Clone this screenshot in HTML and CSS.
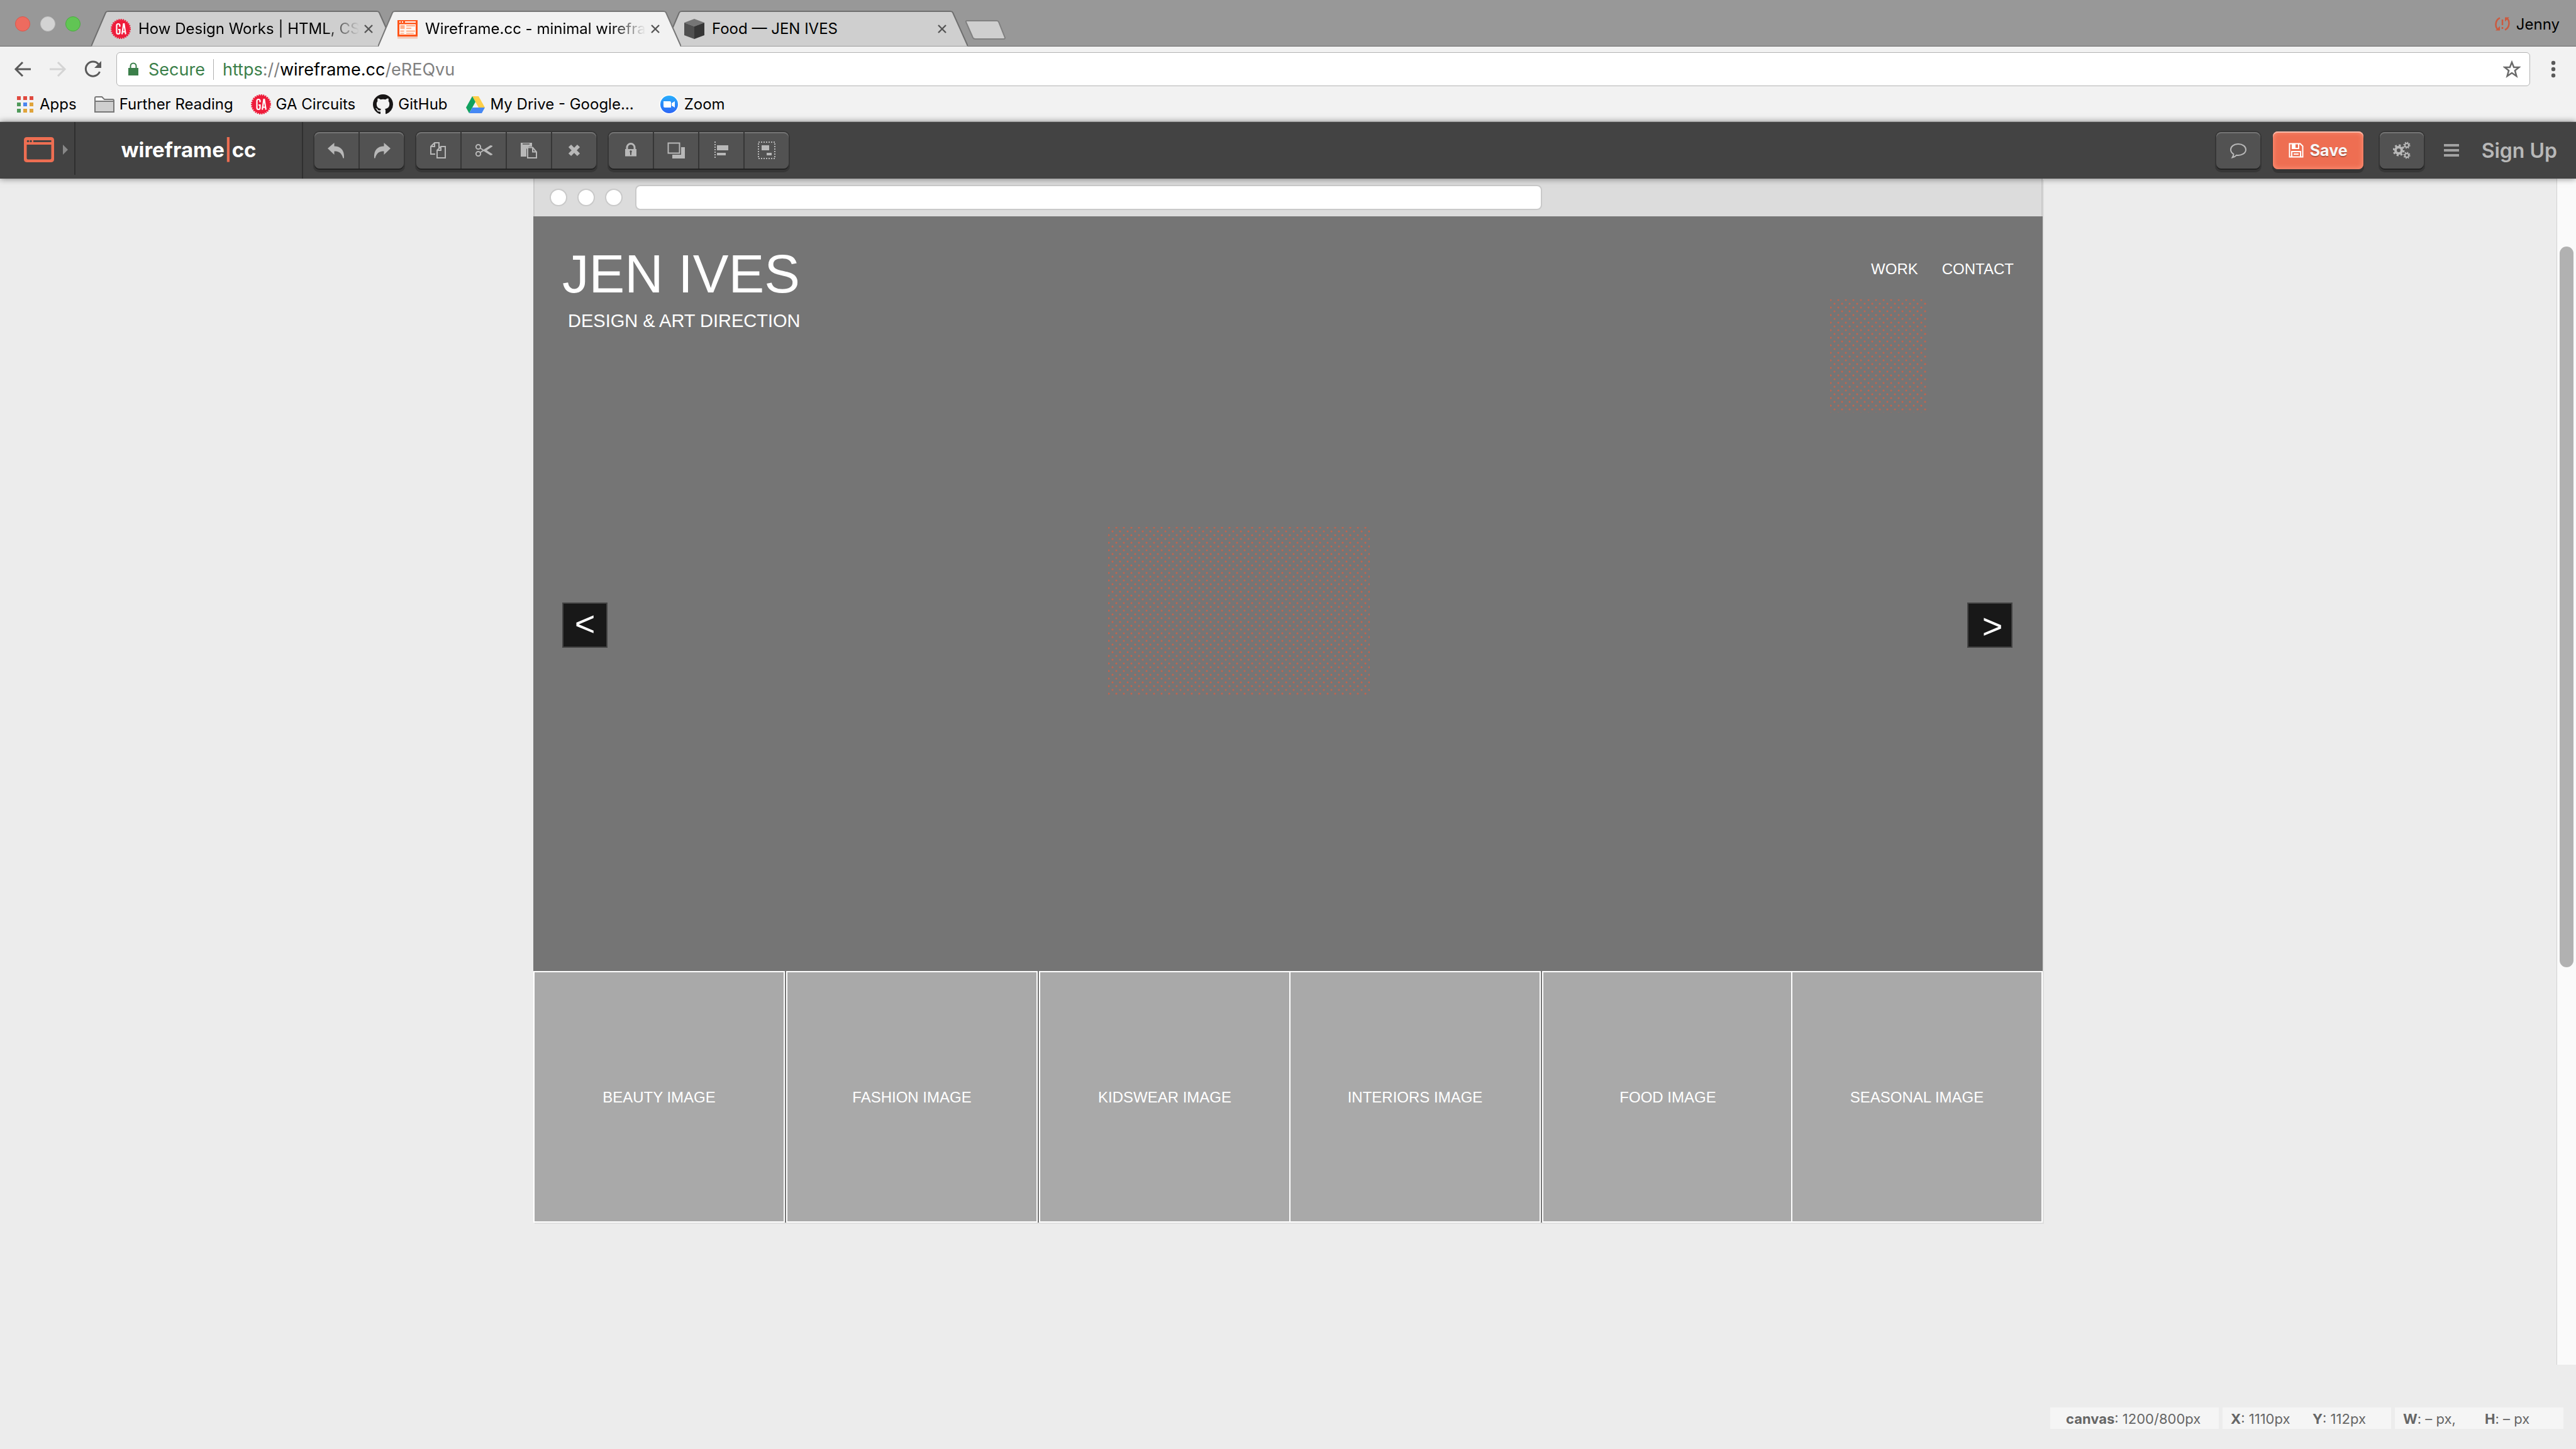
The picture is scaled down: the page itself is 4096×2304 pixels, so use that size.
FILE: index.html
```html
<!DOCTYPE html>
<html lang="en">
<head>
<meta charset="utf-8">
<title>Wireframe.cc - minimal wireframing tool</title>
<link rel="stylesheet" href="styles.css">
</head>
<body>
<svg class="defs" aria-hidden="true">
  <symbol id="ga" viewBox="0 0 32 32">
    <circle cx="16" cy="16" r="14.5" fill="#ee1c3a"/>
    <circle cx="16" cy="16" r="15" fill="none" stroke="#ee1c3a" stroke-width="2" stroke-dasharray="2 1.5"/>
    <path d="M14.5 12.5v-2a2.5 2.5 0 0 0-5 0v11a2.5 2.5 0 0 0 5 0V17h-2.500M18 24.500l2.500-16.500h.8l2.500 16.500M19 20.500h4" fill="none" stroke="#fff" stroke-width="2.200"/>
  </symbol>
  <symbol id="close" viewBox="0 0 14 14">
    <path d="M1 1l12 12M13 1L1 13" stroke="#555" stroke-width="2.400" fill="none"/>
  </symbol>
  <symbol id="undo" viewBox="0 0 28 28">
    <path d="M0 11L10.500 2v5.500C20 7.500 27 13 26 26.500h-1.500C22 18 18 15.500 10.500 15.500V21z"/>
  </symbol>
</svg>

<header class="browser">
  <div class="tab-strip">
    <div class="lights"><span class="light red"></span><span class="light idle"></span><span class="light green"></span></div>
    <div class="tabs">
      <div class="tab">
        <svg class="tab-shape" viewBox="0 0 482 57" preserveAspectRatio="none"><path d="M0 56.500L23 3Q24 1 27 1H454Q457 1 458 3L482 56.500" fill="#cfcfcf" stroke="#6f6f6f" stroke-width="2"/></svg>
        <svg class="favicon"><use href="#ga"/></svg>
        <span class="tab-title fade">How Design Works | HTML, CS</span>
        <button class="tab-close" aria-label="Close tab"><svg><use href="#close"/></svg></button>
      </div>
      <div class="tab active">
        <svg class="tab-shape" viewBox="0 0 482 57" preserveAspectRatio="none"><path d="M0 57L23 3Q24 1 27 1H454Q457 1 458 3L482 57" fill="#f2f2f2" stroke="#777" stroke-width="2"/></svg>
        <svg class="favicon" viewBox="0 0 32 32"><path d="M0 28h32v3.500H0z" fill="#f3c9b8"/><path d="M0 2h32v26H0z" fill="#ff5519"/><path d="M3 8.500h26v16.500H3z" fill="#fff6f0"/><path d="M3 4h2v2H3zM7 4h2v2H7zM12 4h17v2H12z" fill="#fff"/><path d="M4.500 10h7v6h-7zM14 10h14v2H14zM14 14h8v2h-8zM4.500 18.500h6v2h-6zM14 18.500h14v2H14zM4.500 22.500h6v1.500h-6zM14 22.500h12v1.500H14z" fill="#ffb08c"/></svg>
        <span class="tab-title fade">Wireframe.cc - minimal wirefra</span>
        <button class="tab-close" aria-label="Close tab"><svg><use href="#close"/></svg></button>
      </div>
      <div class="tab">
        <svg class="tab-shape" viewBox="0 0 482 57" preserveAspectRatio="none"><path d="M0 56.500L23 3Q24 1 27 1H454Q457 1 458 3L482 56.500" fill="#cfcfcf" stroke="#6f6f6f" stroke-width="2"/></svg>
        <svg class="favicon" viewBox="0 0 32 32"><path d="M0 6L16 0 32 6 16 12z" fill="#757575"/><path d="M0 6l16 6v20L0 26z" fill="#505050"/><path d="M32 6l-16 6v20l16-6z" fill="#363636"/></svg>
        <span class="tab-title">Food — JEN IVES</span>
        <button class="tab-close" aria-label="Close tab"><svg><use href="#close"/></svg></button>
      </div>
      <button class="new-tab" aria-label="New tab"><svg viewBox="0 0 64 32"><path d="M1 3Q0 1 3 1H50Q52 1 53 3L63 28Q63 30 61 30H16Q13 30 12 28z" fill="#cfcfcf" stroke="#808080" stroke-width="2"/></svg></button>
    </div>
    <button class="profile"><svg viewBox="0 0 24 24" fill="none" stroke="#cb5a3f" stroke-width="2.500"><path d="M8 2.500C0 6 0 17 5 21M16 21.500C24 18 24 7 19 3M12 5v9M12 17v3"/><path d="M1 22.500h7v-7zM23 1.500h-7v7z" fill="#cb5a3f" stroke="none"/></svg>Jenny</button>
  </div>

  <div class="toolbar">
    <button class="nav" aria-label="Back"><svg viewBox="0 0 28 28"><path d="M14 3L3 14l11 11M3 14h24" fill="none" stroke="#5a5a5a" stroke-width="3"/></svg></button>
    <button class="nav" aria-label="Forward"><svg viewBox="0 0 28 28"><path d="M14 3l11 11-11 11M25 14H1" fill="none" stroke="#d4d4d4" stroke-width="3"/></svg></button>
    <button class="nav" aria-label="Reload"><svg viewBox="0 0 28 28"><path d="M22.500 6A11.500 11.500 0 1 0 24.500 18" fill="none" stroke="#5a5a5a" stroke-width="3"/><path d="M27 1v11H16z" fill="#5a5a5a"/></svg></button>
    <div class="omnibox">
      <svg class="lock" viewBox="0 0 16 22"><path d="M0 9h16v12H0z" fill="#3b7f4a"/><path d="M3.500 9V6a4.500 4.500 0 0 1 9 0v3" fill="none" stroke="#3b7f4a" stroke-width="2"/></svg>
      <span class="secure">Secure</span>
      <span class="url"><span class="scheme">https</span>://<span class="host">wireframe.cc</span>/eREQvu</span>
      <button class="star" aria-label="Bookmark this page"><svg viewBox="0 0 28 28"><path d="M14 3l3.200 8h8.300l-6.600 5.200 2.500 8.800L14 20l-7.400 5 2.500-8.800L2.500 11h8.300z" fill="none" stroke="#6a6a6a" stroke-width="2.500"/></svg></button>
    </div>
    <button class="kebab" aria-label="Menu"><svg viewBox="0 0 8 28" fill="#5a5a5a"><circle cx="4" cy="4" r="3.200"/><circle cx="4" cy="14" r="3.200"/><circle cx="4" cy="24" r="3.200"/></svg></button>
  </div>

  <nav class="bookmarks">
    <a href="#"><svg class="i26" viewBox="0 0 26 26"><path d="M0 0h6v6H0zM10 0h6v6h-6zM20 0h6v6h-6z" fill="#e04a3f"/><path d="M0 10h6v6H0zM0 20h6v6H0z" fill="#4f9a5a"/><path d="M10 10h6v6h-6z" fill="#4a86f0"/><path d="M20 10h6v6h-6zM10 20h6v6h-6zM20 20h6v6h-6z" fill="#e0a43a"/></svg>Apps</a>
    <a href="#"><svg viewBox="0 0 32 32"><path d="M1 28V6q0-2 2-2h9l4 4h13q2 0 2 2v18z" fill="#fafafa" stroke="#777" stroke-width="2"/><path d="M1 11h30v16q0 1-1 1H2q-1 0-1-1z" fill="#cfcfcf" stroke="#777" stroke-width="2"/></svg>Further Reading</a>
    <a href="#"><svg><use href="#ga"/></svg>GA Circuits</a>
    <a href="#"><svg viewBox="0 0 16 16"><path fill="#181616" fill-rule="evenodd" d="M8 0C3.580 0 0 3.580 0 8c0 3.540 2.290 6.530 5.470 7.590.4.070.55-.17.55-.38 0-.19-.01-.82-.01-1.490-2.010.37-2.530-.49-2.690-.94-.09-.23-.48-.94-.82-1.130-.28-.15-.68-.52-.01-.53.63-.01 1.080.58 1.230.82.720 1.210 1.870.87 2.330.66.070-.52.280-.87.510-1.070-1.780-.2-3.640-.89-3.640-3.950 0-.87.310-1.590.82-2.150-.08-.2-.36-1.020.08-2.120 0 0 .67-.21 2.200.82.640-.18 1.320-.27 2-.27s1.360.09 2 .27c1.530-1.040 2.200-.82 2.200-.82.440 1.100.16 1.920.08 2.120.51.560.82 1.270.82 2.150 0 3.070-1.870 3.750-3.650 3.950.29.250.54.730.54 1.480 0 1.070-.01 1.930-.01 2.200 0 .21.150.46.550.38A8.010 8.010 0 0 0 16 8c0-4.420-3.580-8-8-8z"/></svg>GitHub</a>
    <a href="#"><svg viewBox="0 0 32 32"><path d="M11 3h10l10 18H21z" fill="#ffcf48"/><path d="M11 3l5 9L6 30 1 21z" fill="#11a15f"/><path d="M11 21h20l-5 9H6z" fill="#4688f4"/></svg>My Drive - Google…</a>
    <a href="#" class="last"><svg viewBox="0 0 32 32"><defs><linearGradient id="zg" x2="0" y2="1"><stop offset="0" stop-color="#28aefc"/><stop offset="1" stop-color="#2c65f5"/></linearGradient></defs><circle cx="16" cy="16" r="15.500" fill="#fff"/><circle cx="16" cy="16" r="14" fill="url(#zg)"/><path d="M7 11h10q2 0 2 2v8H9q-2 0-2-2zM20 14l5-3v10l-5-3z" fill="#fff"/></svg>Zoom</a>
  </nav>
</header>

<div class="appbar">
  <button class="app-menu" aria-label="Device"><svg class="device" viewBox="0 0 48 40"><path fill="#ee6e52" fill-rule="evenodd" d="M5 0h38q5 0 5 5v30q0 5-5 5H5q-5 0-5-5V5q0-5 5-5zM4.500 12v21.500q0 2 2 2h35q2 0 2-2V12zM15 5v3h28.500V5z"/><circle cx="6.500" cy="6.500" r="1.800" fill="#444"/><circle cx="11" cy="6.500" r="1.800" fill="#444"/></svg><svg class="caret" viewBox="0 0 8 16"><path d="M0 0l8 8-8 8z" fill="#888"/></svg></button>
  <a class="brand" href="#">wireframe<span>|</span>cc</a>
  <div class="groups">
    <div class="group">
      <button aria-label="Undo"><svg><use href="#undo"/></svg></button>
      <button aria-label="Redo"><svg class="flip"><use href="#undo"/></svg></button>
    </div>
    <div class="group">
      <button aria-label="Copy"><svg viewBox="0 0 28 28" class="line"><path d="M9 20H2V8l6-6h7v8M8 2v6H2M18 8h7v18H12V14zM18 8v6h-6"/></svg></button>
      <button aria-label="Cut"><svg viewBox="0 0 28 28" class="line"><circle cx="5.500" cy="8.500" r="3.600"/><circle cx="5.500" cy="19.500" r="3.600"/><path d="M8.500 10.500L25 21l2-.5L15 12.500M8.500 17.500L25 7l2 .5L15 15.500"/></svg></button>
      <button aria-label="Paste"><svg viewBox="0 0 28 28"><path d="M1 2h18v6h-5l-4 4v12H1z"/><path d="M4 4h11" stroke="#525252" stroke-width="1.500"/><path d="M12 9.500h8l6 7V26H12zM20 9.500v7h6" fill="#525252" stroke="#b8b8b8" stroke-width="2"/></svg></button>
      <button aria-label="Delete"><svg viewBox="0 0 28 28"><path d="M7 7l14 14M21 7L7 21" stroke="#b8b8b8" stroke-width="6"/></svg></button>
    </div>
    <div class="group">
      <button aria-label="Lock"><svg viewBox="0 0 28 28"><path fill-rule="evenodd" d="M5 12h18v11.500H5zM14 14a2 2 0 0 0-1 3.500v4h2v-4a2 2 0 0 0-1-3.500z"/><path d="M8 12V9.500a6 6 0 0 1 12 0V12" fill="none" stroke="#b8b8b8" stroke-width="3"/></svg></button>
      <button aria-label="Arrange"><svg viewBox="0 0 28 28"><path d="M1.500 2.500h18v16h-18z" fill="none" stroke="#b8b8b8" stroke-width="2"/><path d="M22 9h6v18H8v-6h14z"/></svg></button>
      <button aria-label="Align"><svg viewBox="0 0 28 28"><path d="M4 0v28" stroke="#b8b8b8" stroke-width="2" stroke-dasharray="2 2"/><path d="M7 6h18v8H7zM7 18h14v4H7z"/></svg></button>
      <button aria-label="Group"><svg viewBox="0 0 28 28"><path d="M1 1h26v26H1z" fill="none" stroke="#b8b8b8" stroke-width="2" stroke-dasharray="2 2"/><path d="M6 6h12v8H6zM14 18h8v4h-8z"/></svg></button>
    </div>
  </div>
  <div class="actions">
    <div class="group"><button aria-label="Comments"><svg viewBox="0 0 28 28" class="line"><path d="M14 4C7 4 2 8 2 13c0 3 2 5.500 4.500 7 0 2-1 4-2 5.500 3-.5 5-2 6.500-3.700 8 1 15-3 15-8.800C26 8 21 4 14 4z"/></svg></button></div>
    <button class="save"><svg viewBox="0 0 24 24"><path d="M1.500 1.500h17l4 4v17h-21zM5 22v-8h14v8M8 18h8M6 2v7h10V2" fill="none" stroke="#fff" stroke-width="2"/><path d="M6 2h5v7H6z" fill="#fff"/></svg>Save</button>
    <div class="group settings"><button aria-label="Settings"><svg viewBox="0 0 28 28" fill="none" stroke="#b8b8b8"><circle cx="9" cy="14" r="5" stroke-width="4"/><circle cx="9" cy="14" r="8" stroke-width="3" stroke-dasharray="3.140 3.140"/><circle cx="22" cy="6" r="3" stroke-width="2"/><circle cx="22" cy="6" r="4.600" stroke-width="2" stroke-dasharray="1.800 1.800"/><circle cx="22" cy="22" r="3" stroke-width="2"/><circle cx="22" cy="22" r="4.600" stroke-width="2" stroke-dasharray="1.800 1.800"/></svg></button></div>
    <button class="burger" aria-label="Menu"><svg viewBox="0 0 24 20"><path d="M0 0h24v4H0zM0 8h24v4H0zM0 16h24v4H0z" fill="#a2a2a2"/></svg></button>
    <a class="signup" href="#">Sign Up</a>
  </div>
</div>

<main class="workspace">
  <div class="canvas">
    <div class="frame-bar"><span class="dot"></span><span class="dot"></span><span class="dot"></span><span class="frame-url"></span></div>
    <section class="hero">
      <div class="hero-top">
        <div class="title"><h1>JEN IVES</h1><p>DESIGN &amp; ART DIRECTION</p></div>
        <nav><a href="#">WORK</a><a href="#">CONTACT</a></nav>
      </div>
      <div class="slider"><button aria-label="Previous">&lt;</button><button class="next" aria-label="Next">&gt;</button></div>
      <div class="selection small"></div>
      <div class="selection large"></div>
    </section>
    <div class="tiles">
      <div class="tile">BEAUTY IMAGE</div>
      <div class="tile">FASHION IMAGE</div>
      <div class="tile">KIDSWEAR IMAGE</div>
      <div class="tile lap-left">INTERIORS IMAGE</div>
      <div class="tile">FOOD IMAGE</div>
      <div class="tile lap-more">SEASONAL IMAGE</div>
    </div>
  </div>
  <div class="scroll-track"><div class="scroll-thumb"></div></div>
  <div class="status">
    <div class="size"><span><b>canvas</b>: 1200/800px</span></div>
    <div><span><b>X</b>: 1110px</span><span><b>Y</b>: 112px</span></div>
    <div><span><b>W</b>: – px,</span><span><b>H</b>: – px</span></div>
  </div>
</main>
</body>
</html>
```
FILE: styles.css
```css
* { box-sizing: border-box; }
body {
  margin: 0;
  min-height: 100vh;
  display: flex;
  flex-direction: column;
  background: #ececec;
  font-family: Inter, "Liberation Sans", sans-serif;
  font-size: 24px;
  color: #000;
}
button {
  margin: 0;
  padding: 0;
  border: 0;
  background: none;
  font: inherit;
  color: inherit;
}
a { color: inherit; text-decoration: none; }
svg { display: block; flex: none; }
.defs { position: absolute; width: 0; height: 0; }

/* browser window */
.browser { background: #f2f2f2; border-bottom: 1px solid #cfcfcf; }
.tab-strip {
  display: flex;
  height: 74px;
  background: #989898;
  box-shadow: inset 0 -1px #6a6a6a;
}
.lights { display: flex; gap: 16px; padding: 26px 0 0 24px; width: 145px; }
.light { width: 24px; height: 24px; border-radius: 50%; border: 1px solid; }
.red { background: #ed6b5f; border-color: #d9574b; }
.idle { background: #d3d3d3; border-color: #c0c0c0; }
.green { background: #61c554; border-color: #4bab40; }
.tabs { display: flex; align-items: flex-end; flex: 1; }
.tab {
  position: relative;
  display: flex;
  align-items: center;
  width: 482px;
  height: 57px;
  padding: 0 33px 0 31px;
}
.tab + .tab { margin-left: -26px; }
.tab.active { z-index: 1; }
.tab-shape { position: absolute; inset: 0; width: 100%; height: 100%; }
.favicon { position: relative; width: 32px; height: 32px; }
.tab-title {
  position: relative;
  flex: 1;
  min-width: 0;
  margin: 0 8px 0 12px;
  white-space: nowrap;
}
.fade { mask-image: linear-gradient(to right, #000 calc(100% - 56px), transparent); }
.tab-close { position: relative; margin-right: 1px; }
.tab-close svg { width: 14px; height: 14px; }
.new-tab { margin: 0 0 10px -4px; }
.new-tab svg { width: 64px; height: 32px; }
.profile { display: flex; align-items: center; gap: 10px; padding: 2px 26px 0 0; }
.profile svg { width: 24px; height: 24px; }

.toolbar { display: flex; align-items: center; height: 72px; padding: 0 32px 0 22px; }
.nav { width: 28px; margin-right: 28px; }
.nav svg { width: 28px; height: 28px; }
.omnibox {
  display: flex;
  align-items: center;
  flex: 1;
  height: 54px;
  margin-right: 33px;
  margin-left: -5px;
  padding: 0 14px 0 18px;
  border: 1px solid #b3b3b3;
  border-radius: 6px;
  background: #fff;
  font-size: 27px;
}
.lock { width: 16px; height: 22px; margin-right: 16px; }
.secure {
  padding-right: 13px;
  margin-right: 14px;
  border-right: 1px solid #b0b0b0;
  color: #3b7f4a;
}
.url { flex: 1; color: #808080; }
.scheme { color: #3b7f4a; }
.host { color: #000; }
.star svg { width: 28px; height: 28px; }
.kebab svg { width: 8px; height: 28px; }
.bookmarks {
  display: flex;
  align-items: center;
  gap: 28px;
  height: 47px;
  padding: 0 27px 8px;
}
.bookmarks a { display: flex; align-items: center; gap: 8px; }
.bookmarks svg { width: 32px; height: 32px; }
.bookmarks .i26 { width: 26px; height: 26px; margin-right: 2px; }
.bookmarks .last { margin-left: 12px; }

/* application bar */
.appbar {
  position: relative;
  z-index: 2;
  display: flex;
  align-items: center;
  height: 90px;
  background: #434343;
  box-shadow: 0 0 10px rgba(0, 0, 0, .5);
}
.app-menu {
  display: flex;
  align-items: center;
  align-self: flex-start;
  gap: 14px;
  width: 120px;
  height: 84px;
  padding: 4px 0 0 38px;
  border-right: 2px solid #2f2f2f;
}
.device { width: 48px; height: 40px; }
.caret { width: 8px; height: 16px; }
.brand {
  display: flex;
  align-items: center;
  justify-content: center;
  width: 362px;
  height: 90px;
  padding-bottom: 2px;
  border-right: 2px solid #2f2f2f;
  color: #fff;
  font-size: 33px;
  font-weight: 700;
}
.brand span { color: #ee6e52; font-weight: 600; }
.groups { display: flex; gap: 20px; margin-left: 18px; }
.group {
  display: flex;
  gap: 2px;
  height: 58px;
  border-radius: 8px;
  background: #363636;
  box-shadow: 0 2px #222, 0 4px 0 2px #363636, 0 0 0 2px #363636;
}
.group button {
  display: grid;
  place-items: center;
  width: 70px;
  background: #525252;
  box-shadow: inset 0 2px #757575;
}
.group button:first-child { border-radius: 8px 0 0 8px; }
.group button:last-child { border-radius: 0 8px 8px 0; }
.group button:only-child { border-radius: 8px; }
.group svg { width: 28px; height: 28px; fill: #b8b8b8; }
.group .line { fill: none; stroke: #b8b8b8; stroke-width: 2; }
.settings svg { fill: none; }
.flip { transform: scaleX(-1); }
.actions { display: flex; align-items: center; margin-left: auto; padding-right: 30px; }
.save {
  display: flex;
  align-items: center;
  justify-content: center;
  gap: 10px;
  width: 144px;
  height: 60px;
  margin: 0 26px 0 20px;
  border-radius: 8px;
  background: #ee6e52;
  box-shadow: inset 0 2px #ffb9a8, inset 0 0 8px #ff9a80, 0 5px 0 1px #343434;
  color: #f6f6f6;
  font-size: 25px;
  font-weight: 700;
  text-shadow: 0 2px rgba(0, 0, 0, .25);
}
.save svg { width: 24px; height: 24px; }
.burger { margin: 0 36px 0 32px; }
.burger svg { width: 24px; height: 20px; }
.signup { color: #b8b8b8; font-size: 32px; font-weight: 600; }

/* drawing area */
.workspace { position: relative; flex: 1; }
.canvas {
  max-width: 2400px;
  margin: 0 auto;
  font-family: "Liberation Sans", Arial, sans-serif;
  color: #fff;
  box-shadow: 2px 2px #dedede;
}
.frame-bar {
  display: flex;
  align-items: center;
  gap: 16px;
  height: 60px;
  padding-left: 24px;
  border: solid #c9c9c9;
  border-width: 0 2px;
  background: #dcdcdc;
}
.dot { width: 28px; height: 28px; border: 2px solid #c9c9c9; border-radius: 50%; background: #fff; }
.frame-url {
  width: 1442px;
  height: 40px;
  margin-left: 4px;
  border: 2px solid #c9c9c9;
  border-radius: 8px;
  background: #fff;
}
.hero { position: relative; height: 1200px; padding: 44px 46px; background: #757575; }
.hero-top { display: flex; justify-content: space-between; }
h1 { margin: 0; font-size: 85px; line-height: 96px; font-weight: 400; }
.title p { margin: 10px 0 0 9px; font-size: 29px; line-height: 32px; }
.hero nav { display: flex; gap: 38px; margin-top: 24px; font-size: 24px; line-height: 32px; }
.slider { display: flex; justify-content: space-between; margin: 432px 2px 0 0; }
.slider button {
  width: 72px;
  height: 72px;
  padding-bottom: 4px;
  border: 2px solid #434343;
  background: #181818;
  font-size: 56px;
  line-height: 64px;
}
.slider .next { padding: 4px 0 0 8px; }
.selection {
  --dot: radial-gradient(circle at 6px 6px, #c0644f 1px, transparent 2px);
  position: absolute;
  background: var(--dot) -5px -5px / 12px 12px, var(--dot) 1px 1px / 12px 12px;
}
.small { left: 2062px; top: 132px; width: 153px; height: 180px; }
.large { left: 914px; top: 494px; width: 416px; height: 268px; }
.tiles { display: flex; gap: 2px; background: #757575; }
.tile {
  display: grid;
  place-items: center;
  width: 400px;
  flex: none;
  height: 400px;
  padding-top: 2px;
  border: 2px solid #fff;
  background: #a9a9a9;
  font-size: 24px;
}
.lap-left { margin-left: -4px; }
.lap-more { margin-left: -6px; }
.scroll-track {
  position: absolute;
  top: 0;
  right: 0;
  bottom: 134px;
  width: 31px;
  padding: 108px 4px 0;
  border-left: 1px solid #d2d2d2;
  background: #fafafa;
}
.scroll-thumb { width: 22px; height: 1146px; border-radius: 11px; background: #b1b1b1; }
.status {
  position: absolute;
  right: 20px;
  bottom: 32px;
  display: flex;
  gap: 6px;
  color: #666;
  font-size: 22px;
}
.status div {
  display: grid;
  grid-template-columns: 130px 1fr;
  align-items: center;
  width: 268px;
  height: 34px;
  padding: 2px 0 0 13px;
  background: #f5f5f5;
  white-space: nowrap;
}
.status .size { padding-left: 25px; }
```
